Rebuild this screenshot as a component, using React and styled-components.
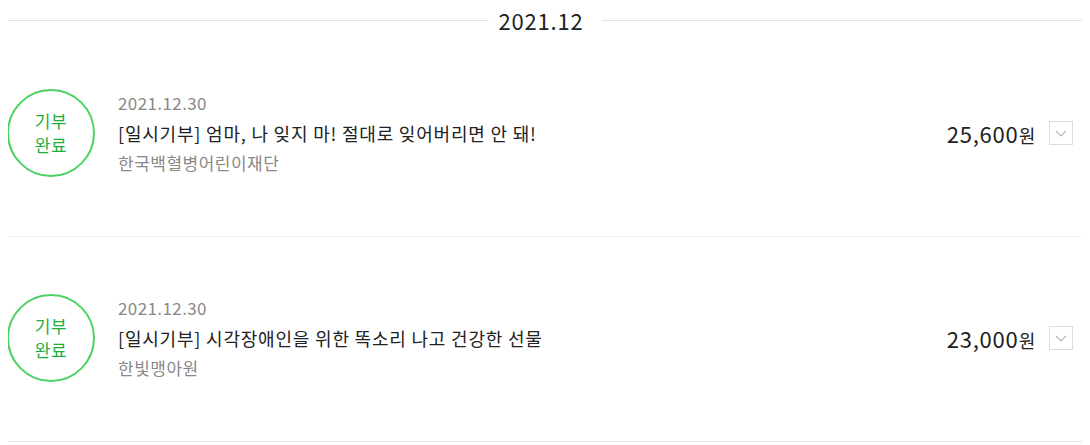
import styled, { createGlobalStyle } from "styled-components";

const GlobalStyle = createGlobalStyle`
  body {
    margin: 8px;
    background: #fff;
    font-family: "Noto Sans CJK KR", "Noto Sans", sans-serif;
    color: #222;
  }
`;

const donations = [
  {
    date: "2021.12.30",
    title: "[일시기부] 엄마, 나 잊지 마! 절대로 잊어버리면 안 돼!",
    org: "한국백혈병어린이재단",
    amount: "25,600",
  },
  {
    date: "2021.12.30",
    title: "[일시기부] 시각장애인을 위한 똑소리 나고 건강한 선물",
    org: "한빛맹아원",
    amount: "23,000",
  },
];

function App() {
  return (
    <>
      <GlobalStyle />
      <Lista>
        <MesTitulo>
          <span>2021.12</span>
        </MesTitulo>
        {donations.map((d, i) => (
          <Item key={i}>
            <Selo>
              기부
              <br />
              완료
            </Selo>
            <Info>
              <Data>{d.date}</Data>
              <Titulo>{d.title}</Titulo>
              <Org>{d.org}</Org>
            </Info>
            <Valor>
              {d.amount}
              <Won>원</Won>
            </Valor>
            <BotaoAbrir aria-label="펼치기">
              <svg width="12" height="7" viewBox="0 0 12 7">
                <path d="M1 1l5 5 5-5" fill="none" stroke="#b5b5b5" strokeWidth="1.2" />
              </svg>
            </BotaoAbrir>
          </Item>
        ))}
      </Lista>
    </>
  );
}

export default App;

const Lista = styled.div`
  display: flex;
  flex-direction: column;
  width: 1074px;
`;

const MesTitulo = styled.div`
  display: flex;
  align-items: center;
  height: 24px;
  font-size: 22px;
  letter-spacing: 0.8px;
  color: #222;

  &::before,
  &::after {
    content: "";
    flex: 1;
    height: 1px;
    background: #e2e2e2;
  }

  span {
    line-height: 24px;
    margin: 0 18px 0 10px;
  }
`;

const Item = styled.div`
  display: flex;
  align-items: center;
  padding: 56px 0 58px;
  border-bottom: 1px solid #f0f0f0;

  &:last-child {
    border-bottom-color: #e2e2e2;
  }
`;

const Selo = styled.div`
  width: 84px;
  height: 84px;
  border: 2px solid #4cd264;
  border-radius: 50%;
  display: flex;
  align-items: center;
  justify-content: center;
  text-align: center;
  color: #1eae3c;
  font-size: 17px;
  line-height: 24px;
  letter-spacing: 0.5px;
  margin-left: -1px;
  flex-shrink: 0;
`;

const Info = styled.div`
  flex: 1;
  display: flex;
  flex-direction: column;
  margin-left: 23px;
`;

const Data = styled.div`
  font-size: 17px;
  line-height: 30px;
  letter-spacing: 0.4px;
  color: #888;
`;

const Titulo = styled.div`
  font-size: 18px;
  line-height: 30px;
  letter-spacing: 0.8px;
  color: #222;
`;

const Org = styled.div`
  font-size: 17px;
  line-height: 30px;
  letter-spacing: 0.5px;
  color: #888;
`;

const Valor = styled.div`
  font-size: 22px;
  letter-spacing: 0.8px;
  color: #222;
  margin-right: 13px;
`;

const Won = styled.span`
  font-size: 18px;
`;

const BotaoAbrir = styled.button`
  width: 24px;
  height: 24px;
  border: 1px solid #dcdcdc;
  background: #fff;
  padding: 0;
  display: flex;
  align-items: center;
  justify-content: center;
  margin-right: 9px;
  cursor: pointer;
`;
